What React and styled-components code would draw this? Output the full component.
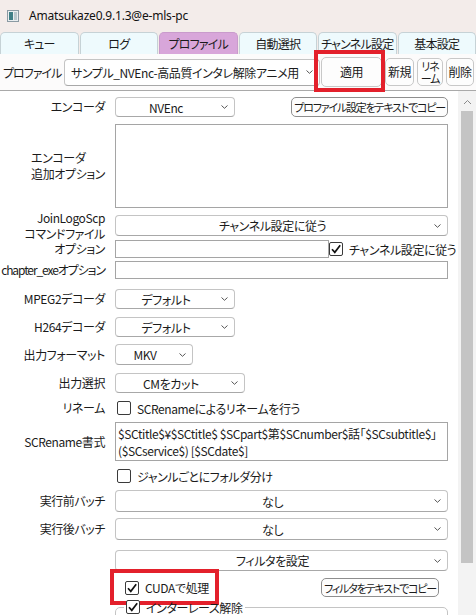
import React from 'react';
import styled, { createGlobalStyle } from 'styled-components';

const GlobalStyle = createGlobalStyle`
  html, body {
    margin: 0;
    padding: 0;
    background: #fff;
  }
  body {
    font-family: 'Noto Sans CJK JP', 'Noto Sans', sans-serif;
    font-size: 12px;
    letter-spacing: -0.4px;
    color: #1b1b1b;
    font-feature-settings: 'palt';
  }
  * {
    box-sizing: border-box;
  }
`;

const Window = styled.div`
  width: 476px;
  height: 615px;
  overflow: hidden;
  display: flex;
  flex-direction: column;
  background: #fff;
`;

const TitleBar = styled.div`
  height: 31px;
  flex: none;
  display: flex;
  align-items: center;
  gap: 10px;
  padding-left: 7px;
  background: #f3ecea;
  font-family: 'Noto Sans', sans-serif;
  font-size: 12px;
  letter-spacing: -0.2px;
  color: #111;
`;

const TabBar = styled.div`
  height: 23px;
  flex: none;
  display: flex;
  gap: 1px;
  background: #f3ecea;
`;

const Tab = styled.div`
  flex: 1;
  display: flex;
  align-items: center;
  justify-content: center;
  white-space: nowrap;
  border: 1px solid ${p => (p.$active ? '#c99bcc' : '#c6d2d6')};
  border-bottom: none;
  border-radius: 5px 5px 0 0;
  background: ${p => (p.$active ? '#d8a6da' : '#eefafd')};
  letter-spacing: -0.8px;
  margin-top: 1px;
`;

const ProfileBar = styled.div`
  height: 37px;
  flex: none;
  display: flex;
  align-items: center;
  padding: 0 2px 0 3px;
  background: #fcfbfb;
  border-bottom: 1px solid #a9a9a9;
`;

const BarLabel = styled.span`
  width: 61px;
  flex: none;
  white-space: nowrap;
  letter-spacing: -1px;
`;

const Select = styled.div`
  width: ${p => (p.$w ? `${p.$w}px` : '100%')};
  height: ${p => p.$h || 20}px;
  display: flex;
  align-items: center;
  background: #fff;
  border: 1px solid #c4c4c4;
  border-bottom-color: #a8a8a8;
  border-radius: 4px;
  flex: none;
  white-space: nowrap;
  overflow: hidden;
`;

const SelectText = styled.span`
  flex: 1;
  min-width: 0;
  overflow: hidden;
  text-align: ${p => (p.$left ? 'left' : 'center')};
  padding-left: ${p => (p.$left ? 6 : 0)}px;
`;

const Chevron = styled.svg`
  width: 18px;
  flex: none;
  height: 6px;
`;

const Button = styled.div`
  height: ${p => p.$h || 20}px;
  width: ${p => (p.$w ? `${p.$w}px` : 'auto')};
  padding: 0 ${p => (p.$w ? 0 : 2)}px;
  display: flex;
  align-items: center;
  justify-content: center;
  text-align: center;
  line-height: 12px;
  background: #fdfdfd;
  border: 1px solid ${p => (p.$dark ? '#8e8e8e' : '#c8c8c8')};
  border-radius: 5px;
  white-space: nowrap;
  flex: none;
  position: relative;
  font-size: ${p => (p.$small ? 11 : 12)}px;
  letter-spacing: ${p => (p.$small ? -1.2 : -0.4)}px;
`;

const Highlight = styled.div`
  position: absolute;
  left: ${p => p.$l}px;
  right: ${p => p.$r}px;
  top: ${p => p.$t}px;
  bottom: ${p => p.$b}px;
  border: 4px solid #e3202b;
  pointer-events: none;
`;

const BarButtons = styled.div`
  display: flex;
  align-items: center;
  gap: 3px;
  margin-left: auto;
`;

const Body = styled.div`
  flex: 1;
  display: flex;
  min-height: 0;
`;

const Content = styled.div`
  flex: 1;
  min-width: 0;
  padding: 6px 10px 0 0;
  display: flex;
  flex-direction: column;
`;

const Row = styled.div`
  display: grid;
  grid-template-columns: 105px minmax(0, 1fr);
  column-gap: 10px;
  align-items: center;
  margin-top: ${p => p.$mt || 0}px;
`;

const Label = styled.div`
  justify-self: end;
  text-align: ${p => (p.$left ? 'left' : 'right')};
  line-height: 16px;
  white-space: nowrap;
  letter-spacing: ${p => (p.$tight ? -1.1 : -0.4)}px;
  margin: ${p => (p.$pull ? `-${p.$pull}px 0` : '0')};
`;

const Field = styled.div`
  width: ${p => (p.$w ? `${p.$w}px` : '100%')};
  height: ${p => p.$h || 18}px;
  background: #fff;
  border: 1px solid #a5a5a5;
  padding: 2px 2px;
  line-height: 17px;
  white-space: nowrap;
  overflow: hidden;
  flex: none;
`;

const Inline = styled.div`
  display: flex;
  align-items: center;
  justify-content: ${p => p.$justify || 'flex-start'};
  padding: ${p => p.$pad || '0'};
`;

const Check = styled.label`
  display: flex;
  align-items: center;
  gap: 6px;
  height: 16px;
  white-space: nowrap;
  margin-left: ${p => p.$ml || 0}px;
  position: relative;
`;

const Box = styled.span`
  width: 14px;
  height: 14px;
  flex: none;
  border: 1px solid #3a3a3a;
  border-radius: 2px;
  background: #fff;
  display: flex;
  align-items: center;
  justify-content: center;
`;

const Group = styled.fieldset`
  margin: 2px 0 0;
  padding: 0 0 0 6px;
  border: 1px solid #c4c4c4;
  border-radius: 5px;
  min-height: 40px;
`;

const Legend = styled.legend`
  padding: 0 2px;
  margin-left: 2px;
`;

const ScrollBar = styled.div`
  width: 18px;
  flex: none;
  background: #f3f3f3;
  display: flex;
  flex-direction: column;
  align-items: center;
  padding-top: 8px;
`;

const Thumb = styled.div`
  width: 12px;
  height: 452px;
  margin-top: 6px;
  background: #c4c4c4;
`;

const AppIcon = () => (
  <svg width="12" height="12" viewBox="0 0 12 12">
    <rect x="0.5" y="0.5" width="11" height="11" fill="#e9eef0" stroke="#8a9aa3" />
    <rect x="2" y="2" width="4" height="8" fill="#3f7f86" />
    <rect x="7" y="2" width="3" height="8" fill="#b9c7cc" />
  </svg>
);

const Down = () => (
  <Chevron viewBox="0 0 18 6">
    <path d="M5.5 1.5 L8.5 4.3 L11.5 1.5" fill="none" stroke="#555" strokeWidth="1" />
  </Chevron>
);

const Combo = ({ children, w, h, left }) => (
  <Select $w={w} $h={h}>
    <SelectText $left={left}>{children}</SelectText>
    <Down />
  </Select>
);

const CheckBox = ({ checked, children, ml, red }) => (
  <Check $ml={ml}>
    <Box>
      {checked && (
        <svg width="12" height="12" viewBox="0 0 12 12">
          <path d="M2 6.2 L4.8 9.3 L10.2 2.3" fill="none" stroke="#111" strokeWidth="1.7" />
        </svg>
      )}
    </Box>
    <span>{children}</span>
    {red && <Highlight $l={-15} $r={-10} $t={-11} $b={-9} />}
  </Check>
);

const tabs = ['キュー', 'ログ', 'プロファイル', '自動選択', 'チャンネル設定', '基本設定'];

export default function App() {
  return (
    <Window>
      <GlobalStyle />
      <TitleBar>
        <AppIcon />
        <span>Amatsukaze0.9.1.3@e-mls-pc</span>
      </TitleBar>
      <TabBar>
        {tabs.map(t => (
          <Tab key={t} $active={t === 'プロファイル'}>
            {t}
          </Tab>
        ))}
      </TabBar>
      <ProfileBar>
        <BarLabel>プロファイル</BarLabel>
        <Combo w={256} h={27} left>
          サンプル_NVEnc-高品質インタレ解除アニメ用（
        </Combo>
        <BarButtons>
          <Button $w={61} $h={30}>
            適用
            <Highlight $l={-8} $r={-4} $t={-8} $b={-6} />
          </Button>
          <Button $w={29} $h={28}>新規</Button>
          <Button $w={26} $h={28} $small>
            リネ
            <br />
            ーム
          </Button>
          <Button $w={28} $h={28}>削除</Button>
        </BarButtons>
      </ProfileBar>
      <Body>
        <Content>
          <Row>
            <Label>エンコーダ</Label>
            <Inline $justify="space-between">
              <Combo w={120}>NVEnc</Combo>
              <Button $dark $small>プロファイル設定をテキストでコピー</Button>
            </Inline>
          </Row>
          <Row $mt={7}>
            <Label $left>
              エンコーダ
              <br />
              追加オプション
            </Label>
            <Field $h={84} />
          </Row>
          <Row $mt={7}>
            <Label $pull={6}>
              JoinLogoScp
              <br />
              コマンドファイル
            </Label>
            <Combo h={21}>チャンネル設定に従う</Combo>
          </Row>
          <Row $mt={4}>
            <Label>オプション</Label>
            <Inline>
              <Field $w={214} />
              <CheckBox checked ml={0}>
                チャンネル設定に従う
              </CheckBox>
            </Inline>
          </Row>
          <Row $mt={3}>
            <Label $tight>chapter_exeオプション</Label>
            <Field />
          </Row>
          <Row $mt={10}>
            <Label>MPEG2デコーダ</Label>
            <Combo w={120}>デフォルト</Combo>
          </Row>
          <Row $mt={8}>
            <Label>H264デコーダ</Label>
            <Combo w={120}>デフォルト</Combo>
          </Row>
          <Row $mt={7}>
            <Label>出力フォーマット</Label>
            <Combo w={78} h={21}>
              MKV
            </Combo>
          </Row>
          <Row $mt={8}>
            <Label>出力選択</Label>
            <Combo w={130}>CMをカット</Combo>
          </Row>
          <Row $mt={7}>
            <Label>リネーム</Label>
            <CheckBox ml={2}>SCRenameによるリネームを行う</CheckBox>
          </Row>
          <Row $mt={6}>
            <Label>SCRename書式</Label>
            <Field $h={39}>
              $SCtitle$¥$SCtitle$ $SCpart$第$SCnumber$話「$SCsubtitle$」
              <br />
              ($SCservice$) [$SCdate$]
            </Field>
          </Row>
          <Row $mt={7}>
            <span />
            <CheckBox ml={2}>ジャンルごとにフォルダ分け</CheckBox>
          </Row>
          <Row $mt={6}>
            <Label>実行前バッチ</Label>
            <Combo h={22}>なし</Combo>
          </Row>
          <Row $mt={6}>
            <Label>実行後バッチ</Label>
            <Combo h={22}>なし</Combo>
          </Row>
          <Row $mt={10}>
            <span />
            <Combo h={21}>フィルタを設定</Combo>
          </Row>
          <Row $mt={7}>
            <span />
            <Inline $justify="space-between" $pad="0 9px 0 0">
              <CheckBox checked ml={10} red>
                CUDAで処理
              </CheckBox>
              <Button $h={19} $dark $small>
                フィルタをテキストでコピー
              </Button>
            </Inline>
          </Row>
          <Row>
            <span />
            <Group>
              <Legend>
                <CheckBox checked>インターレース解除</CheckBox>
              </Legend>
            </Group>
          </Row>
        </Content>
        <ScrollBar>
          <svg width="9" height="6" viewBox="0 0 9 6">
            <path d="M1 5 L4.5 1.5 L8 5" fill="none" stroke="#8a8a8a" strokeWidth="1" />
          </svg>
          <Thumb />
        </ScrollBar>
      </Body>
    </Window>
  );
}
